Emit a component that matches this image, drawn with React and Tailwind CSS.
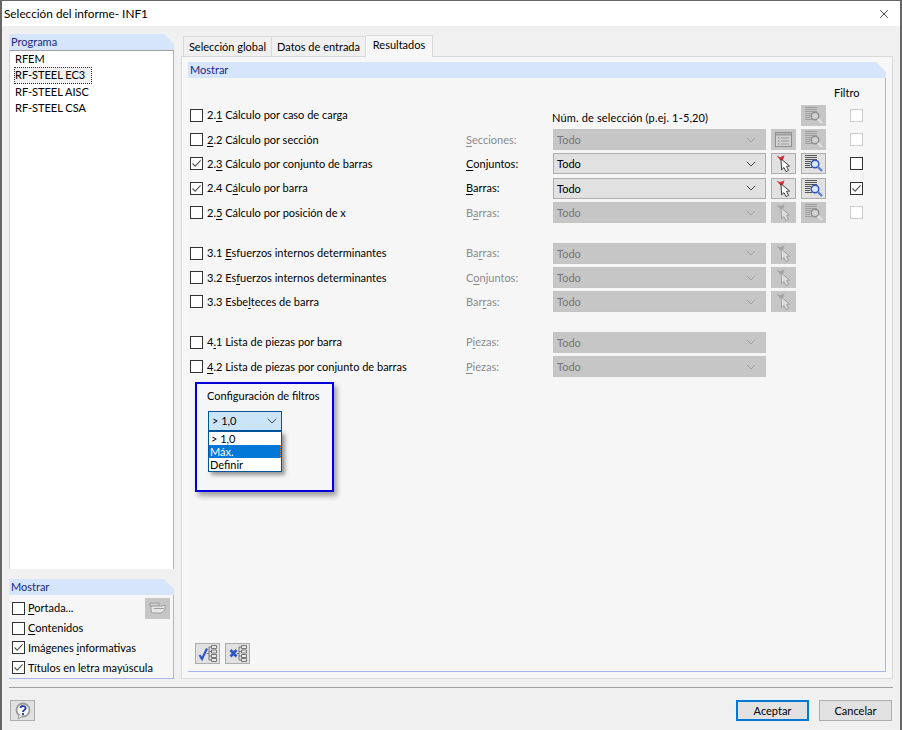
import React from 'react';
import { X } from 'lucide-react';

const font = "font-['Lato','Open_Sans',sans-serif]";

function Check({ checked, disabled, className = '' }) {
  return (
    <span className={`flex h-[13px] w-[13px] shrink-0 items-center justify-center border bg-white ${disabled ? 'border-[#cccccc]' : 'border-[#333333]'} ${className}`}>
      {checked && (
        <svg width="11" height="11" viewBox="0 0 11 11" fill="none">
          <path d="M1.5 5.5 L4.2 8.2 L9.6 2.4" stroke="#555555" strokeWidth="1.1" />
        </svg>
      )}
    </span>
  );
}

function Chevron({ color = '#444444' }) {
  return (
    <svg width="10" height="6" viewBox="0 0 10 6" fill="none">
      <path d="M0.8 0.8 L5 5 L9.2 0.8" stroke={color} strokeWidth="1" />
    </svg>
  );
}

function Combo({ disabled }) {
  return (
    <div className={`flex h-[21px] w-[213px] items-center justify-between border pl-[3px] pr-[9px] ${disabled ? 'border-[#c4c4c4] bg-[#c6c6c6] text-[#777777]' : 'border-[#adadad] bg-[#e1e1e1] text-black'}`}>
      <span>Todo</span>
      <Chevron color={disabled ? '#a0a0a0' : '#444444'} />
    </div>
  );
}

function IconButton({ disabled, children }) {
  return (
    <div className={`flex h-[21px] w-[25px] shrink-0 items-center justify-center border ${disabled ? 'border-[#c6c6c6] bg-[#c6c6c6]' : 'border-[#adadad] bg-[#e1e1e1]'}`}>
      {children}
    </div>
  );
}

function PinIcon({ disabled }) {
  return (
    <svg width="15" height="17" viewBox="0 0 15 17" fill="none">
      <path d="M0.5 0.5 L4 2.2 L8.5 0.3 L7.4 4 L5.6 6.5 L3 3.8 Z" fill={disabled ? '#a4a4a4' : '#e0303a'} />
      <path d="M5 3.8 L13.5 11 L10.6 11.4 L12.6 15.4 L10 16.6 L8 12.6 L5.6 14.8 Z" fill={disabled ? '#dcdcdc' : '#ffffff'} stroke={disabled ? '#9a9a9a' : '#2a2a2a'} strokeWidth="0.9" />
    </svg>
  );
}

function SearchIcon({ disabled }) {
  const line = disabled ? '#9c9c9c' : '#555555';
  return (
    <svg width="20" height="17" viewBox="0 0 20 17" fill="none">
      <path d="M1 0.5 H13 M1 2.5 H13 M1 4.5 H13 M1 6.5 H7 M1 8.5 H6 M1 10.5 H6 M1 12.5 H8" stroke={line} strokeWidth="1" />
      <circle cx="11" cy="9" r="3.8" fill={disabled ? '#d2d2d2' : '#dbe6f8'} stroke={disabled ? '#8f8f8f' : '#2f55b8'} strokeWidth="1.5" />
      <path d="M14 12 L18 16" stroke={disabled ? '#e0e0e0' : '#5f7fd0'} strokeWidth="2.4" />
    </svg>
  );
}

function TableIcon() {
  return (
    <svg width="17" height="15" viewBox="0 0 17 15" fill="none">
      <rect x="0.5" y="0.5" width="16" height="14" fill="#d2d2d2" stroke="#8f8f8f" />
      <path d="M1 2.5 H16" stroke="#9a9a9a" strokeWidth="2" />
      <path d="M3 6 H4.5 M3 9 H4.5 M3 12 H4.5" stroke="#777777" />
      <path d="M6 6 H14 M6 9 H14 M6 12 H14" stroke="#9a9a9a" />
    </svg>
  );
}

function TreeIcon({ mark }) {
  return (
    <svg width="20" height="17" viewBox="0 0 20 17" fill="none">
      <path d="M9 8.5 H11 M11 2 V15 M11 2 H13 M11 6.5 H13 M11 11 H13 M11 15 H13" stroke="#777777" />
      <path d="M13.5 0.5 H18.5 V3.5 H13.5 Z M13.5 5 H18.5 V8 H13.5 Z M13.5 9.5 H18.5 V12.5 H13.5 Z M13.5 13.5 H18.5 V16.5 H13.5 Z" fill="#e8e8e8" stroke="#777777" />
      {mark === 'check' ? (
        <path d="M1.5 10 L4 14 L9 3.5" stroke="#2f55c4" strokeWidth="2.2" />
      ) : (
        <path d="M2.5 5 L8.5 11.5 M8.5 5 L2.5 11.5" stroke="#2f55c4" strokeWidth="2.6" />
      )}
    </svg>
  );
}

// u = caracter subrayado (atajo de teclado)
function Label({ pre = '', u = '', post = '' }) {
  return <>{pre}<span className="underline underline-offset-2">{u}</span>{post}</>;
}

function Row({ label, field, combo, pin, search, table, filter }) {
  const on = combo === 'on';
  return (
    <div className="flex h-[24.4px] items-center">
      <Check checked={label.checked} />
      <span className="ml-[4px] w-[259px] shrink-0 whitespace-nowrap pb-[1px] text-black">
        <Label pre={label.pre} u={label.u} post={label.post} />
      </span>
      <span className={`w-[87px] shrink-0 pb-[1px] ${on ? 'text-black' : 'text-[#8a8a8a]'}`}>
        {field && <Label pre={field.pre} u={field.u} post={field.post} />}
      </span>
      {combo ? <Combo disabled={!on} /> : (
        <span className="-ml-px w-[214px] shrink-0 whitespace-nowrap pt-[5px] tracking-[0.15px] text-black">Núm. de selección (p.ej. 1-5,20)</span>
      )}
      <div className="ml-[5px] w-[25px] shrink-0">
        {table && <IconButton disabled><TableIcon /></IconButton>}
        {pin && <IconButton disabled={pin === 'off'}><PinIcon disabled={pin === 'off'} /></IconButton>}
      </div>
      <div className="ml-[5px] w-[25px] shrink-0">
        {search && <IconButton disabled={search === 'off'}><SearchIcon disabled={search === 'off'} /></IconButton>}
      </div>
      {filter && <Check disabled={filter === 'off'} checked={filter === 'checked'} className="ml-[24px]" />}
    </div>
  );
}

function Header({ children, className = '' }) {
  return (
    <div className={`h-[16px] bg-[#d6e4fc] pl-[2px] leading-[16px] text-[#1a2a80] [clip-path:polygon(0_0,calc(100%-10px)_0,100%_10px,100%_100%,0_100%)] ${className}`}>
      {children}
    </div>
  );
}

export default function App() {
  return (
    <div className={`${font} flex h-[730px] w-[902px] flex-col overflow-hidden border-x-2 border-t border-[#666666] bg-[#f0f0f0] text-[11px] leading-none text-black`}>
      {/* barra de titulo */}
      <div className="flex h-[25px] shrink-0 items-center justify-between bg-white pl-[2px] pr-[9px]">
        <span className="text-[11.8px]">Selección del informe- INF1</span>
        <X size={14} strokeWidth={1.2} />
      </div>

      <div className="flex min-h-0 flex-1 pl-[7px] pr-[7px] pt-[8px]">
        {/* columna izquierda */}
        <div className="flex h-[645px] w-[165px] shrink-0 flex-col">
          <Header>Programa</Header>
          <div className="flex h-[519px] flex-col border-l border-r border-t border-l-[#d0d0d0] border-r-[#a9b4e8] border-t-[#a0a0a0] bg-white pl-[4px]">
            <div className="flex h-[16.3px] items-center pb-[1px] pl-[1px]">RFEM</div>
            <div className="flex h-[16.3px] w-[78px] items-center border border-dotted border-[#333333] bg-[#f0f0f0] pb-[1px]">RF-STEEL EC3</div>
            <div className="flex h-[16.3px] items-center pb-[1px] pl-[1px]">RF-STEEL AISC</div>
            <div className="flex h-[16.3px] items-center pb-[1px] pl-[1px]">RF-STEEL CSA</div>
          </div>
          <Header className="mt-[10px]">Mostrar</Header>
          <div className="flex h-[84px] flex-col border-b border-r border-[#a9b4e8] bg-[#f6f6f6] pl-[3px] pr-[3px] pt-[3px]">
            <div className="flex h-[20px] items-center">
              <Check />
              <span className="ml-[3px] pb-[1px]"><Label u="P" post="ortada..." /></span>
              <div className="ml-auto">
                <IconButton disabled>
                  <svg width="18" height="12" viewBox="0 0 18 12" fill="none">
                    <path d="M1 1 H10 V4 H1 Z" fill="#d4d4d4" stroke="#9a9a9a" />
                    <path d="M2 4 H13 L16 3 V8 L12 11 H3 L2 8 Z" fill="#e4e4e4" stroke="#a0a0a0" />
                    <path d="M5 6.5 H15" stroke="#9e9e9e" />
                  </svg>
                </IconButton>
              </div>
            </div>
            <div className="flex h-[20px] items-center"><Check /><span className="ml-[3px] pb-[1px]"><Label u="C" post="ontenidos" /></span></div>
            <div className="flex h-[19.5px] items-center"><Check checked /><span className="ml-[3px] pb-[1px]"><Label pre="Imágenes " u="i" post="nformativas" /></span></div>
            <div className="flex h-[20px] items-center"><Check checked /><span className="ml-[3px] pb-[1px]">Títulos en letra mayúscula</span></div>
          </div>
        </div>

        {/* pestañas */}
        <div className="ml-[7px] flex h-[645px] min-w-0 flex-1 flex-col">
          <div className="flex h-[22px] shrink-0 items-end pl-[2px]">
            <div className="flex h-[20px] w-[89px] items-center justify-center whitespace-nowrap border-l border-r border-t border-[#d9d9d9] bg-[#f0f0f0]">Selección global</div>
            <div className="flex h-[20px] w-[94px] items-center justify-center whitespace-nowrap border-r border-t border-[#d9d9d9] bg-[#f0f0f0]">Datos de entrada</div>
            <div className="relative top-[1px] flex h-[22px] w-[67px] items-center justify-center border-r border-t border-[#d9d9d9] bg-[#f7f7f7] pb-[4px]">Resultados</div>
          </div>
          <div className="flex min-h-0 flex-1 flex-col border border-[#d9d9d9] bg-[#f7f7f7] px-[6px] pb-[6px] pt-[5px]">
            <Header>Mostrar</Header>
            <div className="relative flex min-h-0 flex-1 flex-col border-b border-r border-[#a9b4e8] bg-[#f6f6f6] pl-[2px]">
              <div className="h-[25px] pl-[644px] pt-[9px]">Filtro</div>

              <Row label={{ pre: '2.', u: '1', post: ' Cálculo por caso de carga' }} search="off" filter="off" />
              <Row label={{ u: '2', post: '.2 Cálculo por sección' }} field={{ u: 'S', post: 'ecciones:' }} combo="off" table search="off" filter="off" />
              <Row label={{ checked: true, pre: '2.', u: '3', post: ' Cálculo por conjunto de barras' }} field={{ u: 'C', post: 'onjuntos:' }} combo="on" pin="on" search="on" filter="on" />
              <Row label={{ checked: true, pre: '2.4 C', u: 'á', post: 'lculo por barra' }} field={{ u: 'B', post: 'arras:' }} combo="on" pin="on" search="on" filter="checked" />
              <Row label={{ pre: '2.', u: '5', post: ' Cálculo por posición de x' }} field={{ pre: 'B', u: 'a', post: 'rras:' }} combo="off" pin="off" search="off" filter="off" />

              <div className="h-[16px]" />
              <Row label={{ pre: '3.1 ', u: 'E', post: 'sfuerzos internos determinantes' }} field={{ pre: 'Ba', u: 'r', post: 'ras:' }} combo="off" pin="off" />
              <Row label={{ pre: '3.2 Es', u: 'f', post: 'uerzos internos determinantes' }} field={{ pre: 'C', u: 'o', post: 'njuntos:' }} combo="off" pin="off" />
              <Row label={{ pre: '3.3 Esbe', u: 'l', post: 'teces de barra' }} field={{ pre: 'Bar', u: 'r', post: 'as:' }} combo="off" pin="off" />

              <div className="h-[16px]" />
              <Row label={{ pre: '4', u: '.', post: '1 Lista de piezas por barra' }} field={{ pre: 'P', u: 'i', post: 'ezas:' }} combo="off" />
              <Row label={{ u: '4', post: '.2 Lista de piezas por conjunto de barras' }} field={{ u: 'P', post: 'iezas:' }} combo="off" />

              {/* recuadro de aviso sobre el dialogo */}
              <div className="absolute left-[7px] top-[304px] h-[110px] w-[139px] border-2 border-[#0000dd] bg-[#f6f6f6] pl-[11px] pt-[6px] shadow-[3px_4px_5px_rgba(0,0,0,0.35)]">
                <div className="-ml-px whitespace-nowrap leading-[12px]">Configuración de filtros</div>
                <div className="mt-[9px] flex h-[20px] w-[74px] items-center justify-between border border-[#005499] bg-[#cce4f7] pl-[3px] pr-[4px]">
                  <span className="pb-[1px]">&gt; 1,0</span>
                  <Chevron />
                </div>
                <div className="flex h-[41px] w-[74px] flex-col border border-[#005499] bg-white shadow-[3px_3px_4px_rgba(0,0,0,0.4)]">
                  <div className="flex h-[13px] items-center pl-[2px]">&gt; 1,0</div>
                  <div className="flex h-[13px] items-center border-r border-dotted border-r-[#e07820] bg-[#0078d7] pl-[1px] text-white">Máx.</div>
                  <div className="flex h-[13px] items-center pl-[1px]">Definir</div>
                </div>
              </div>

              <div className="mt-auto flex gap-[5px] pb-[7px] pl-[5px]">
                <IconButton><TreeIcon mark="check" /></IconButton>
                <IconButton><TreeIcon mark="x" /></IconButton>
              </div>
            </div>
          </div>
        </div>
      </div>

      {/* pie */}
      <div className="mx-[7px] mb-[9px] flex shrink-0 flex-col">
        <div className="h-[1px] bg-[#a0a0a0]" />
        <div className="mt-[12px] flex h-[21px] items-center">
          <div className="ml-[1px]">
            <IconButton>
              <svg width="18" height="18" viewBox="0 0 18 18" fill="none">
                <circle cx="9" cy="8" r="6.5" fill="#fafafa" stroke="#9a9a9a" strokeWidth="1.8" />
                <path d="M5 13 L4 17 L9 14" fill="#fafafa" stroke="#9a9a9a" />
                <path d="M6.6 6 C6.8 3.4 11.6 3.4 11.6 6.2 C11.6 8 9 8 9 10" stroke="#2a3f9e" strokeWidth="1.9" />
                <path d="M9 11 V13" stroke="#2a3f9e" strokeWidth="1.9" />
              </svg>
            </IconButton>
          </div>
          <div className="ml-auto flex h-[21px] w-[73px] items-center justify-center border-2 border-[#0078d7] bg-[#e1e1e1]">Aceptar</div>
          <div className="ml-[10px] mr-[1px] flex h-[21px] w-[73px] items-center justify-center border border-[#adadad] bg-[#e1e1e1]">Cancelar</div>
        </div>
      </div>
    </div>
  );
}
